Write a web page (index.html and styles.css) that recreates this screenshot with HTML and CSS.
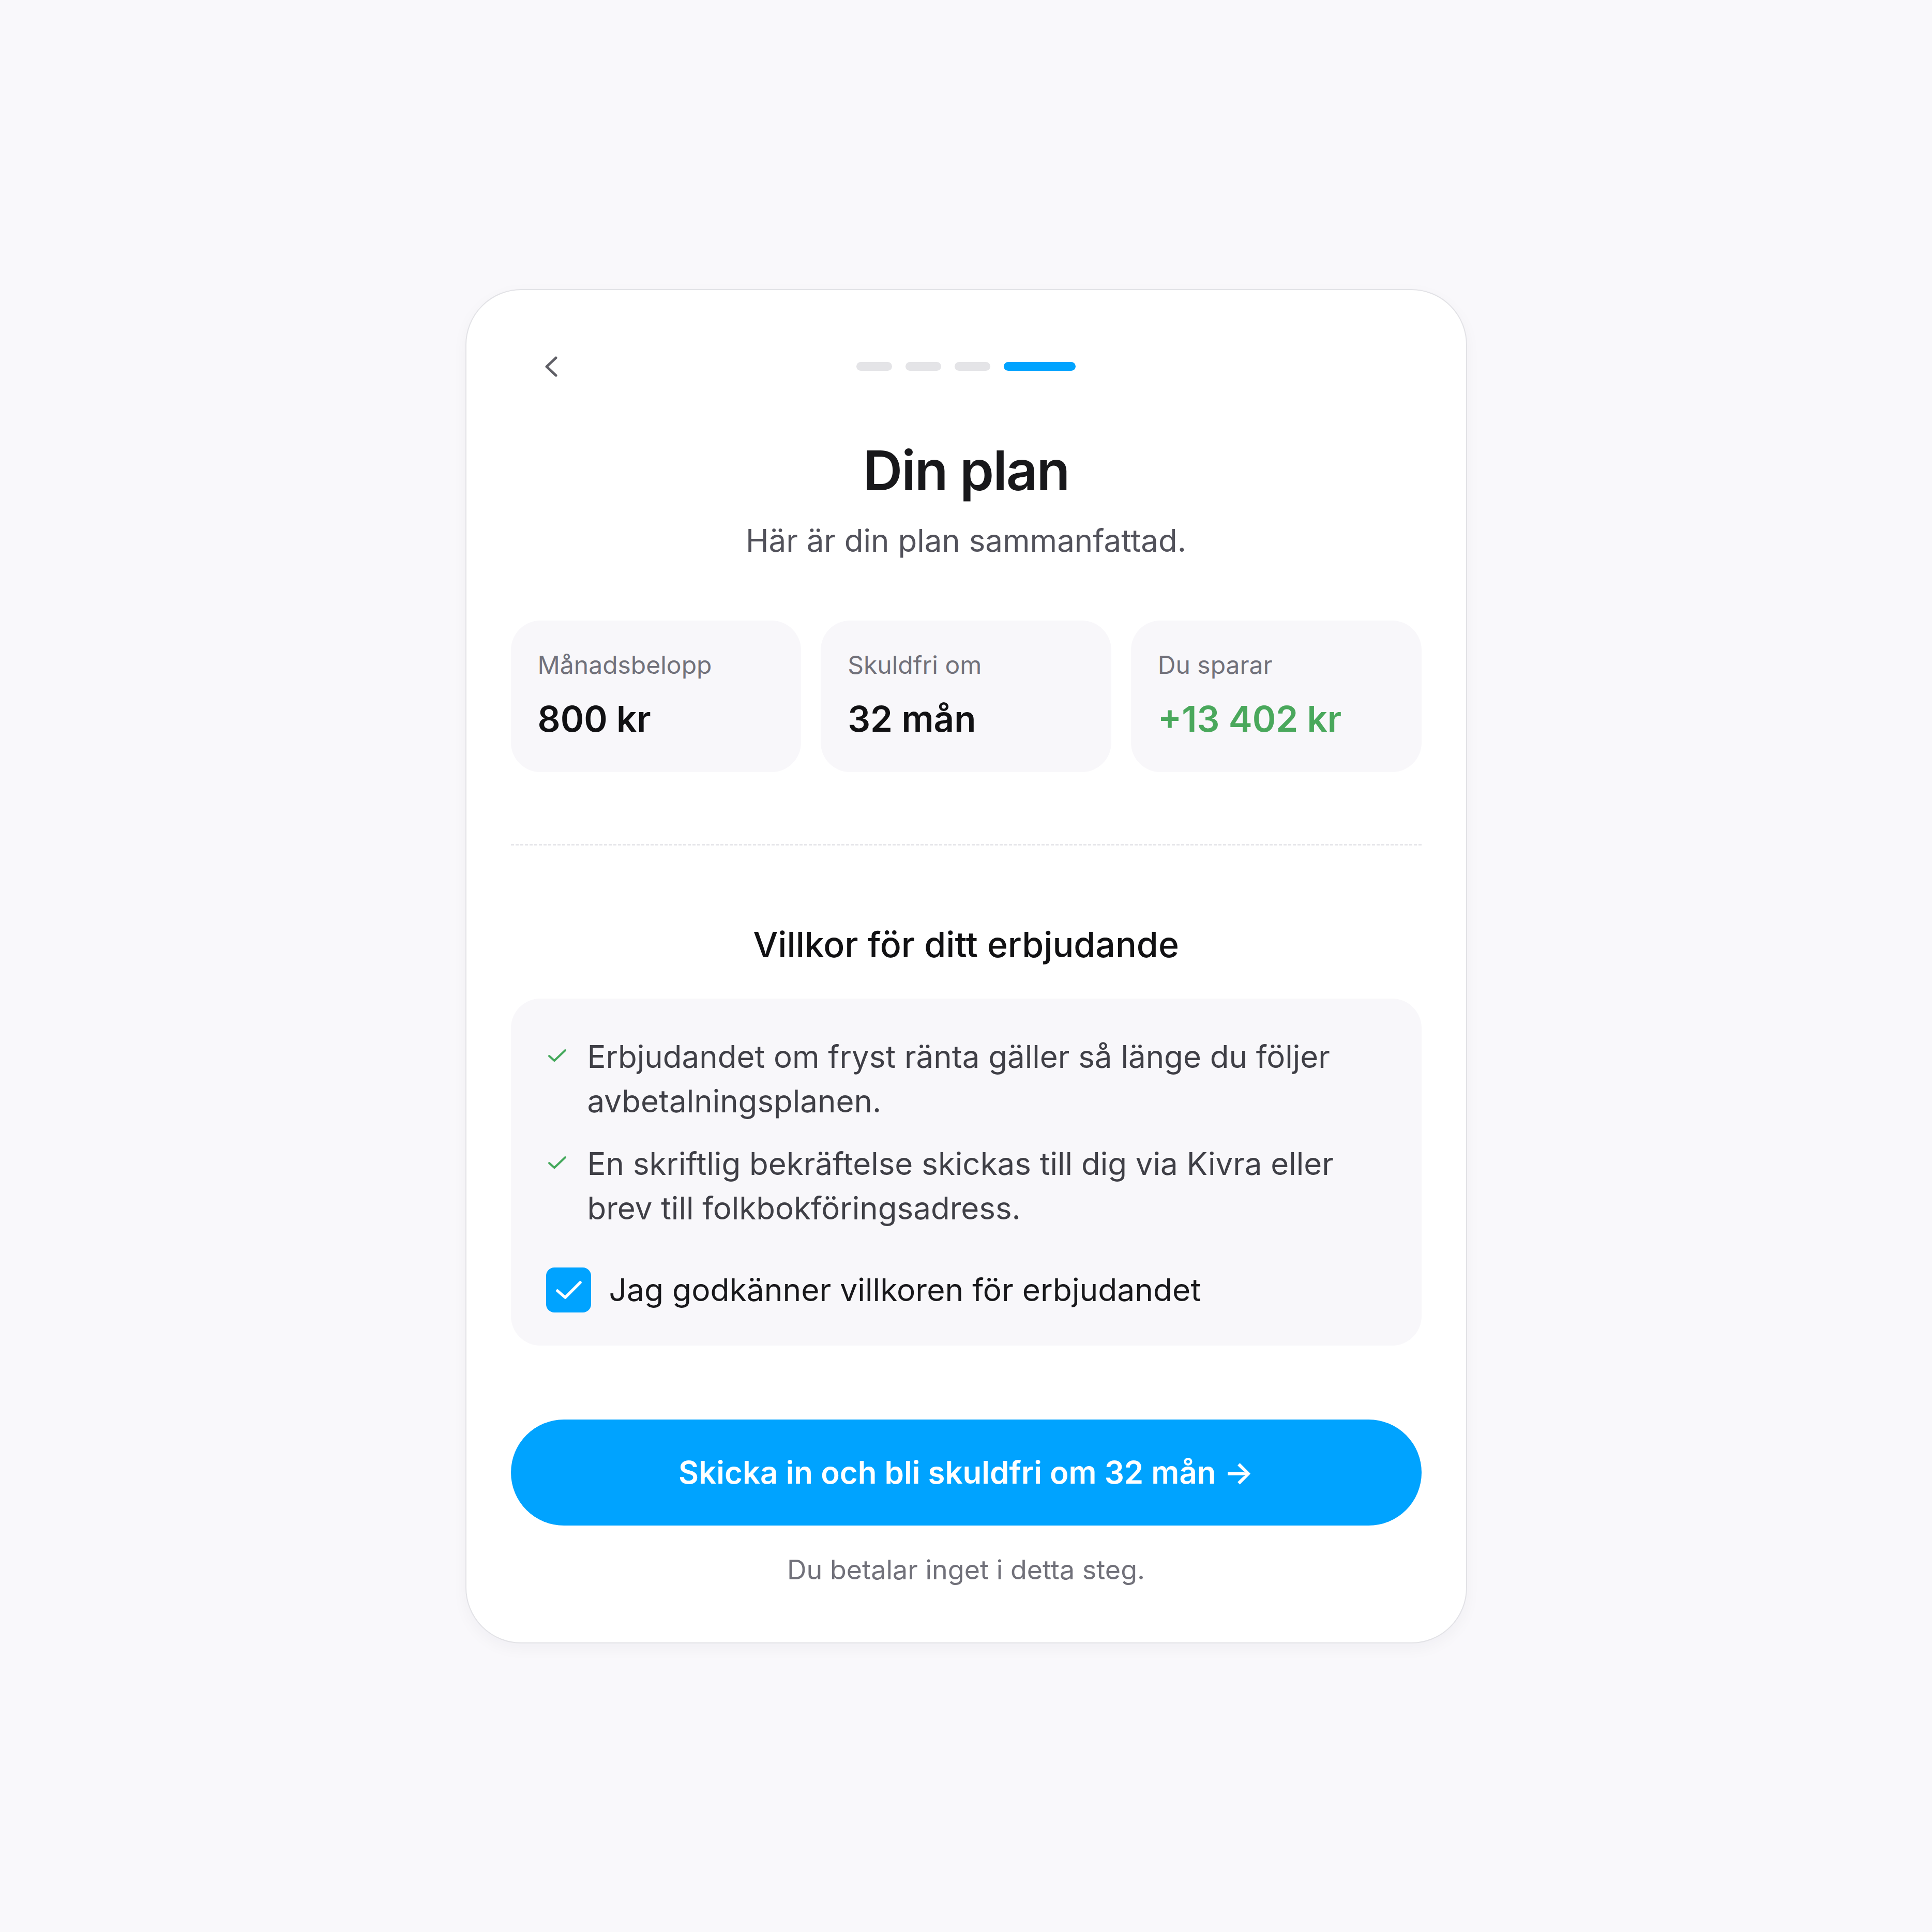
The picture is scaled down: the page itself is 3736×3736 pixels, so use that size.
FILE: index.html
```html
<!DOCTYPE html>
<html lang="sv">
<head>
    <meta charset="utf-8">
    <meta name="viewport" content="width=device-width, initial-scale=1">
    <title>Din plan</title>
    <link rel="stylesheet" href="styles.css">
</head>

<body>
    <div class="card">
        <div class="topBar">
            <button type="button" class="backButton" aria-label="Tillbaka">
                <svg viewBox="0 0 24 40" width="24" height="40">
                    <path d="M21 3 L3 20 L21 37" fill="none" stroke="#5f5f66" stroke-width="5" stroke-linecap="round" stroke-linejoin="round"/>
                </svg>
            </button>
            <div class="steps">
                <span class="step"></span>
                <span class="step"></span>
                <span class="step"></span>
                <span class="step active"></span>
            </div>
        </div>

        <h1 class="title">Din plan</h1>
        <p class="subtitle">Här är din plan sammanfattad.</p>

        <div class="stats">
            <div class="stat">
                <div class="statLabel">Månadsbelopp</div>
                <div class="statValue">800 kr</div>
            </div>
            <div class="stat">
                <div class="statLabel">Skuldfri om</div>
                <div class="statValue">32 mån</div>
            </div>
            <div class="stat">
                <div class="statLabel">Du sparar</div>
                <div class="statValue green">+13 402 kr</div>
            </div>
        </div>

        <div class="divider"></div>

        <h2 class="termsTitle">Villkor för ditt erbjudande</h2>

        <div class="termsBox">
            <div class="term">
                <svg class="tick" viewBox="0 0 44 44" width="44" height="44">
                    <path d="M6 22 L16 31 L37 11" fill="none" stroke="#43a85a" stroke-width="4" stroke-linecap="round" stroke-linejoin="round"/>
                </svg>
                <span>Erbjudandet om fryst ränta gäller så länge du följer avbetalningsplanen.</span>
            </div>
            <div class="term">
                <svg class="tick" viewBox="0 0 44 44" width="44" height="44">
                    <path d="M6 22 L16 31 L37 11" fill="none" stroke="#43a85a" stroke-width="4" stroke-linecap="round" stroke-linejoin="round"/>
                </svg>
                <span>En skriftlig bekräftelse skickas till dig via Kivra eller brev till folkbokföringsadress.</span>
            </div>
            <label class="agree">
                <span class="checkBox">
                    <svg viewBox="0 0 87 87" width="87" height="87">
                        <path d="M22 45 L37 58 L66 29" fill="none" stroke="#ffffff" stroke-width="5.5" stroke-linecap="round" stroke-linejoin="round"/>
                    </svg>
                </span>
                <span>Jag godkänner villkoren för erbjudandet</span>
            </label>
        </div>

        <button type="button" class="submitButton">Skicka in och bli skuldfri om 32 mån →</button>
        <p class="footNote">Du betalar inget i detta steg.</p>
    </div>
</body>
</html>
```

FILE: styles.css
```css
body {
    margin: 0;
    min-height: 100vh;
    display: flex;
    align-items: center;
    justify-content: center;
    background: #f9f8fb;
    font-family: Inter, "Noto Sans", "Liberation Sans", sans-serif;
    color: #18181b;
}

.card {
    box-sizing: border-box;
    width: 1937px;
    padding: 100px 86px 103px;
    background: #ffffff;
    border: 2px solid #e2e2e6;
    border-radius: 108px;
    box-shadow: 0 10px 30px rgba(20, 20, 40, 0.04);
}

.topBar {
    display: grid;
    grid-template-columns: 1fr auto 1fr;
    align-items: center;
    height: 96px;
}

.backButton {
    width: 96px;
    height: 96px;
    margin-left: 30px;
    padding: 0;
    border: none;
    background: none;
    display: flex;
    align-items: center;
    justify-content: center;
    cursor: pointer;
}

.steps {
    display: flex;
    gap: 26px;
}

.step {
    width: 69px;
    height: 17px;
    border-radius: 9px;
    background: #e4e4e7;
}

.step.active {
    width: 139px;
    background: #00a3ff;
}

.title {
    margin: 84px 0 0;
    font-size: 106px;
    line-height: 137px;
    font-weight: 600;
    letter-spacing: -0.02em;
    text-align: center;
}

.subtitle {
    margin: 24px 0 0;
    font-size: 60px;
    line-height: 86px;
    color: #52525b;
    text-align: center;
}

.stats {
    display: grid;
    grid-template-columns: repeat(3, 1fr);
    gap: 38px;
    margin-top: 112px;
}

.stat {
    background: #f8f7fa;
    border-radius: 57px;
    padding: 52px 52px 60px;
}

.statLabel {
    font-size: 48px;
    line-height: 67px;
    color: #71717a;
}

.statValue {
    margin-top: 29px;
    font-size: 69px;
    line-height: 85px;
    font-weight: 600;
    color: #111113;
}

.statValue.green {
    color: #4aa85c;
}

.divider {
    margin-top: 139px;
    border-top: 3px dashed #e6e6ea;
}

.termsTitle {
    margin: 146px 0 0;
    font-size: 68px;
    line-height: 90px;
    font-weight: 500;
    text-align: center;
    color: #111113;
}

.termsBox {
    margin-top: 60px;
    background: #f8f7fa;
    border-radius: 57px;
    padding: 69px 69px 64px 68px;
}

.term {
    display: flex;
    gap: 36px;
    font-size: 60px;
    line-height: 86px;
    color: #3f3f46;
}

.term + .term {
    margin-top: 35px;
}

.tick {
    flex: none;
    margin-top: 20px;
}

.agree {
    display: flex;
    align-items: center;
    gap: 35px;
    margin-top: 72px;
    font-size: 60.5px;
    line-height: 86px;
    color: #18181b;
    cursor: pointer;
}

.checkBox {
    flex: none;
    width: 87px;
    height: 87px;
    border-radius: 16px;
    background: #00a3ff;
    display: flex;
}

.submitButton {
    display: block;
    width: 100%;
    height: 205px;
    margin-top: 143px;
    border: none;
    border-radius: 103px;
    background: #00a3ff;
    color: #ffffff;
    font-family: inherit;
    font-size: 60px;
    font-weight: 600;
    cursor: pointer;
}

.footNote {
    margin: 48px 0 0;
    font-size: 52px;
    line-height: 75px;
    color: #71717a;
    text-align: center;
}
```
